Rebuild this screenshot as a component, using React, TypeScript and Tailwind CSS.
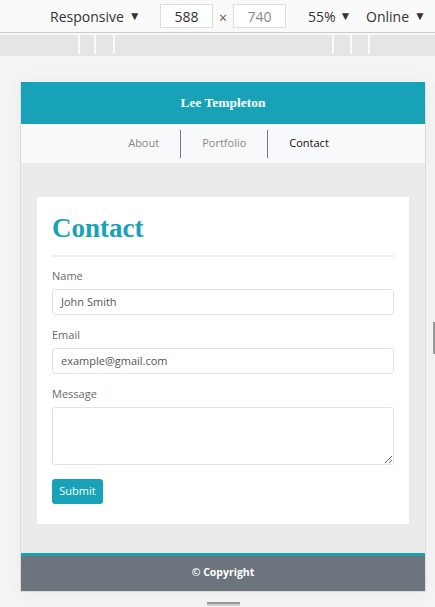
import React from "react";

function Toolbar() {
  return (
    <div className="h-[32px] bg-[#fafafa] flex items-center text-[#333] text-[14px]">
      <span className="ml-[50px] w-[110px] flex items-center">
        Responsive<span className="ml-[5px] text-[12px]">▼</span>
      </span>
      <div className="w-[53px] h-[24px] border border-[#dddddd] bg-white flex items-center justify-center">
        588
      </div>
      <span className="w-[20px] text-center text-[#555] mt-[3px]">×</span>
      <div className="w-[53px] h-[24px] border border-[#dddddd] bg-white flex items-center justify-center text-[#888]">
        740
      </div>
      <span className="ml-[22px] w-[58px] flex items-center">
        55%<span className="ml-[4px] text-[12px]">▼</span>
      </span>
      <span className="flex items-center">
        Online<span className="ml-[5px] text-[12px]">▼</span>
      </span>
    </div>
  );
}

function Ruler() {
  return (
    <div className="border-t border-[#cccccc] pt-[2px] bg-[#f7f7f7]">
      <div className="h-[21px] bg-[#e5e5e5] flex">
        <div className="ml-[78px] w-[2px] h-[19px] bg-[#fafafa]" />
        <div className="ml-[14px] w-[2px] h-[19px] bg-[#fafafa]" />
        <div className="ml-[17px] w-[2px] h-[19px] bg-[#fafafa]" />
        <div className="ml-[217px] w-[2px] h-[19px] bg-[#fafafa]" />
        <div className="ml-[16px] w-[2px] h-[19px] bg-[#fafafa]" />
        <div className="ml-[16px] w-[2px] h-[19px] bg-[#fafafa]" />
      </div>
    </div>
  );
}

function Field({ label, value, area }: { label: string; value?: string; area?: boolean }) {
  return (
    <div className="mb-[12px]">
      <div className="h-[16px] leading-[16px] text-[11px] text-[#6a6a6a] mb-[5px]">{label}</div>
      {area ? (
        <textarea
          readOnly
          className="block w-full h-[58px] border border-[#e0e3e6] rounded-[3px] bg-white resize-y"
        />
      ) : (
        <div className="h-[26px] border border-[#e0e3e6] rounded-[3px] px-[8px] flex items-center text-[11px] text-[#555]">
          {value}
        </div>
      )}
    </div>
  );
}

function Device() {
  return (
    <div className="ml-[20px] mt-[26px] w-[406px] border-x border-b border-[#dcdcdc] shadow-[0_0_18px_rgba(0,0,0,0.04)]">
      <header className="h-[42px] bg-[#17a2b8] flex items-center justify-center text-white font-bold text-[13.5px] font-['Liberation_Serif',serif]">
        Lee Templeton
      </header>
      <nav className="h-[39px] bg-[#f8f9fa] flex items-center justify-center text-[11px] pl-[11px]">
        <a className="px-[21px] h-[28px] flex items-center border-r border-[#6c7a8d] text-[#888]">About</a>
        <a className="px-[21px] h-[28px] flex items-center border-r border-[#6c7a8d] text-[#888]">Portfolio</a>
        <a className="px-[21px] h-[28px] flex items-center text-[#111]">Contact</a>
      </nav>
      <main className="bg-[#ebebeb] px-[16px] pt-[34px] pb-[29px]">
        <div className="bg-white px-[15px] pt-[15px] pb-[10px]">
          <h1 className="font-['Liberation_Serif',serif] font-bold text-[27px] leading-[32px] text-[#17a2b8]">
            Contact
          </h1>
          <div className="mt-[11px] h-[2px] bg-[#eeeeee] mb-[11px]" />
          <Field label="Name" value="John Smith" />
          <Field label="Email" value="example@gmail.com" />
          <Field label="Message" area />
          <button className="mt-[1px] h-[25px] w-[51px] rounded-[3px] bg-[#17a2b8] text-white text-[11px] mb-[10px]">
            Submit
          </button>
        </div>
      </main>
      <footer className="border-t-[3px] border-[#17a2b8] h-[38px] bg-[#6c757d] flex items-center justify-center text-white font-bold text-[10.5px]">
        © Copyright
      </footer>
    </div>
  );
}

export default function App() {
  return (
    <div className="w-[435px] h-[607px] overflow-hidden bg-[#f4f4f4] font-['Open_Sans',sans-serif] flex flex-col">
      <Toolbar />
      <Ruler />
      <div className="flex-1 flex">
        <div className="flex flex-col">
          <Device />
          <div className="ml-[207px] mt-[10px] w-[33px]">
            <div className="h-[2px] bg-[#9a9a9a]" />
            <div className="h-[2px] bg-[#cfcfcf]" />
          </div>
        </div>
        <div className="ml-[7px] mt-[266px] w-[2px] h-[32px] bg-[#999]" />
      </div>
    </div>
  );
}
